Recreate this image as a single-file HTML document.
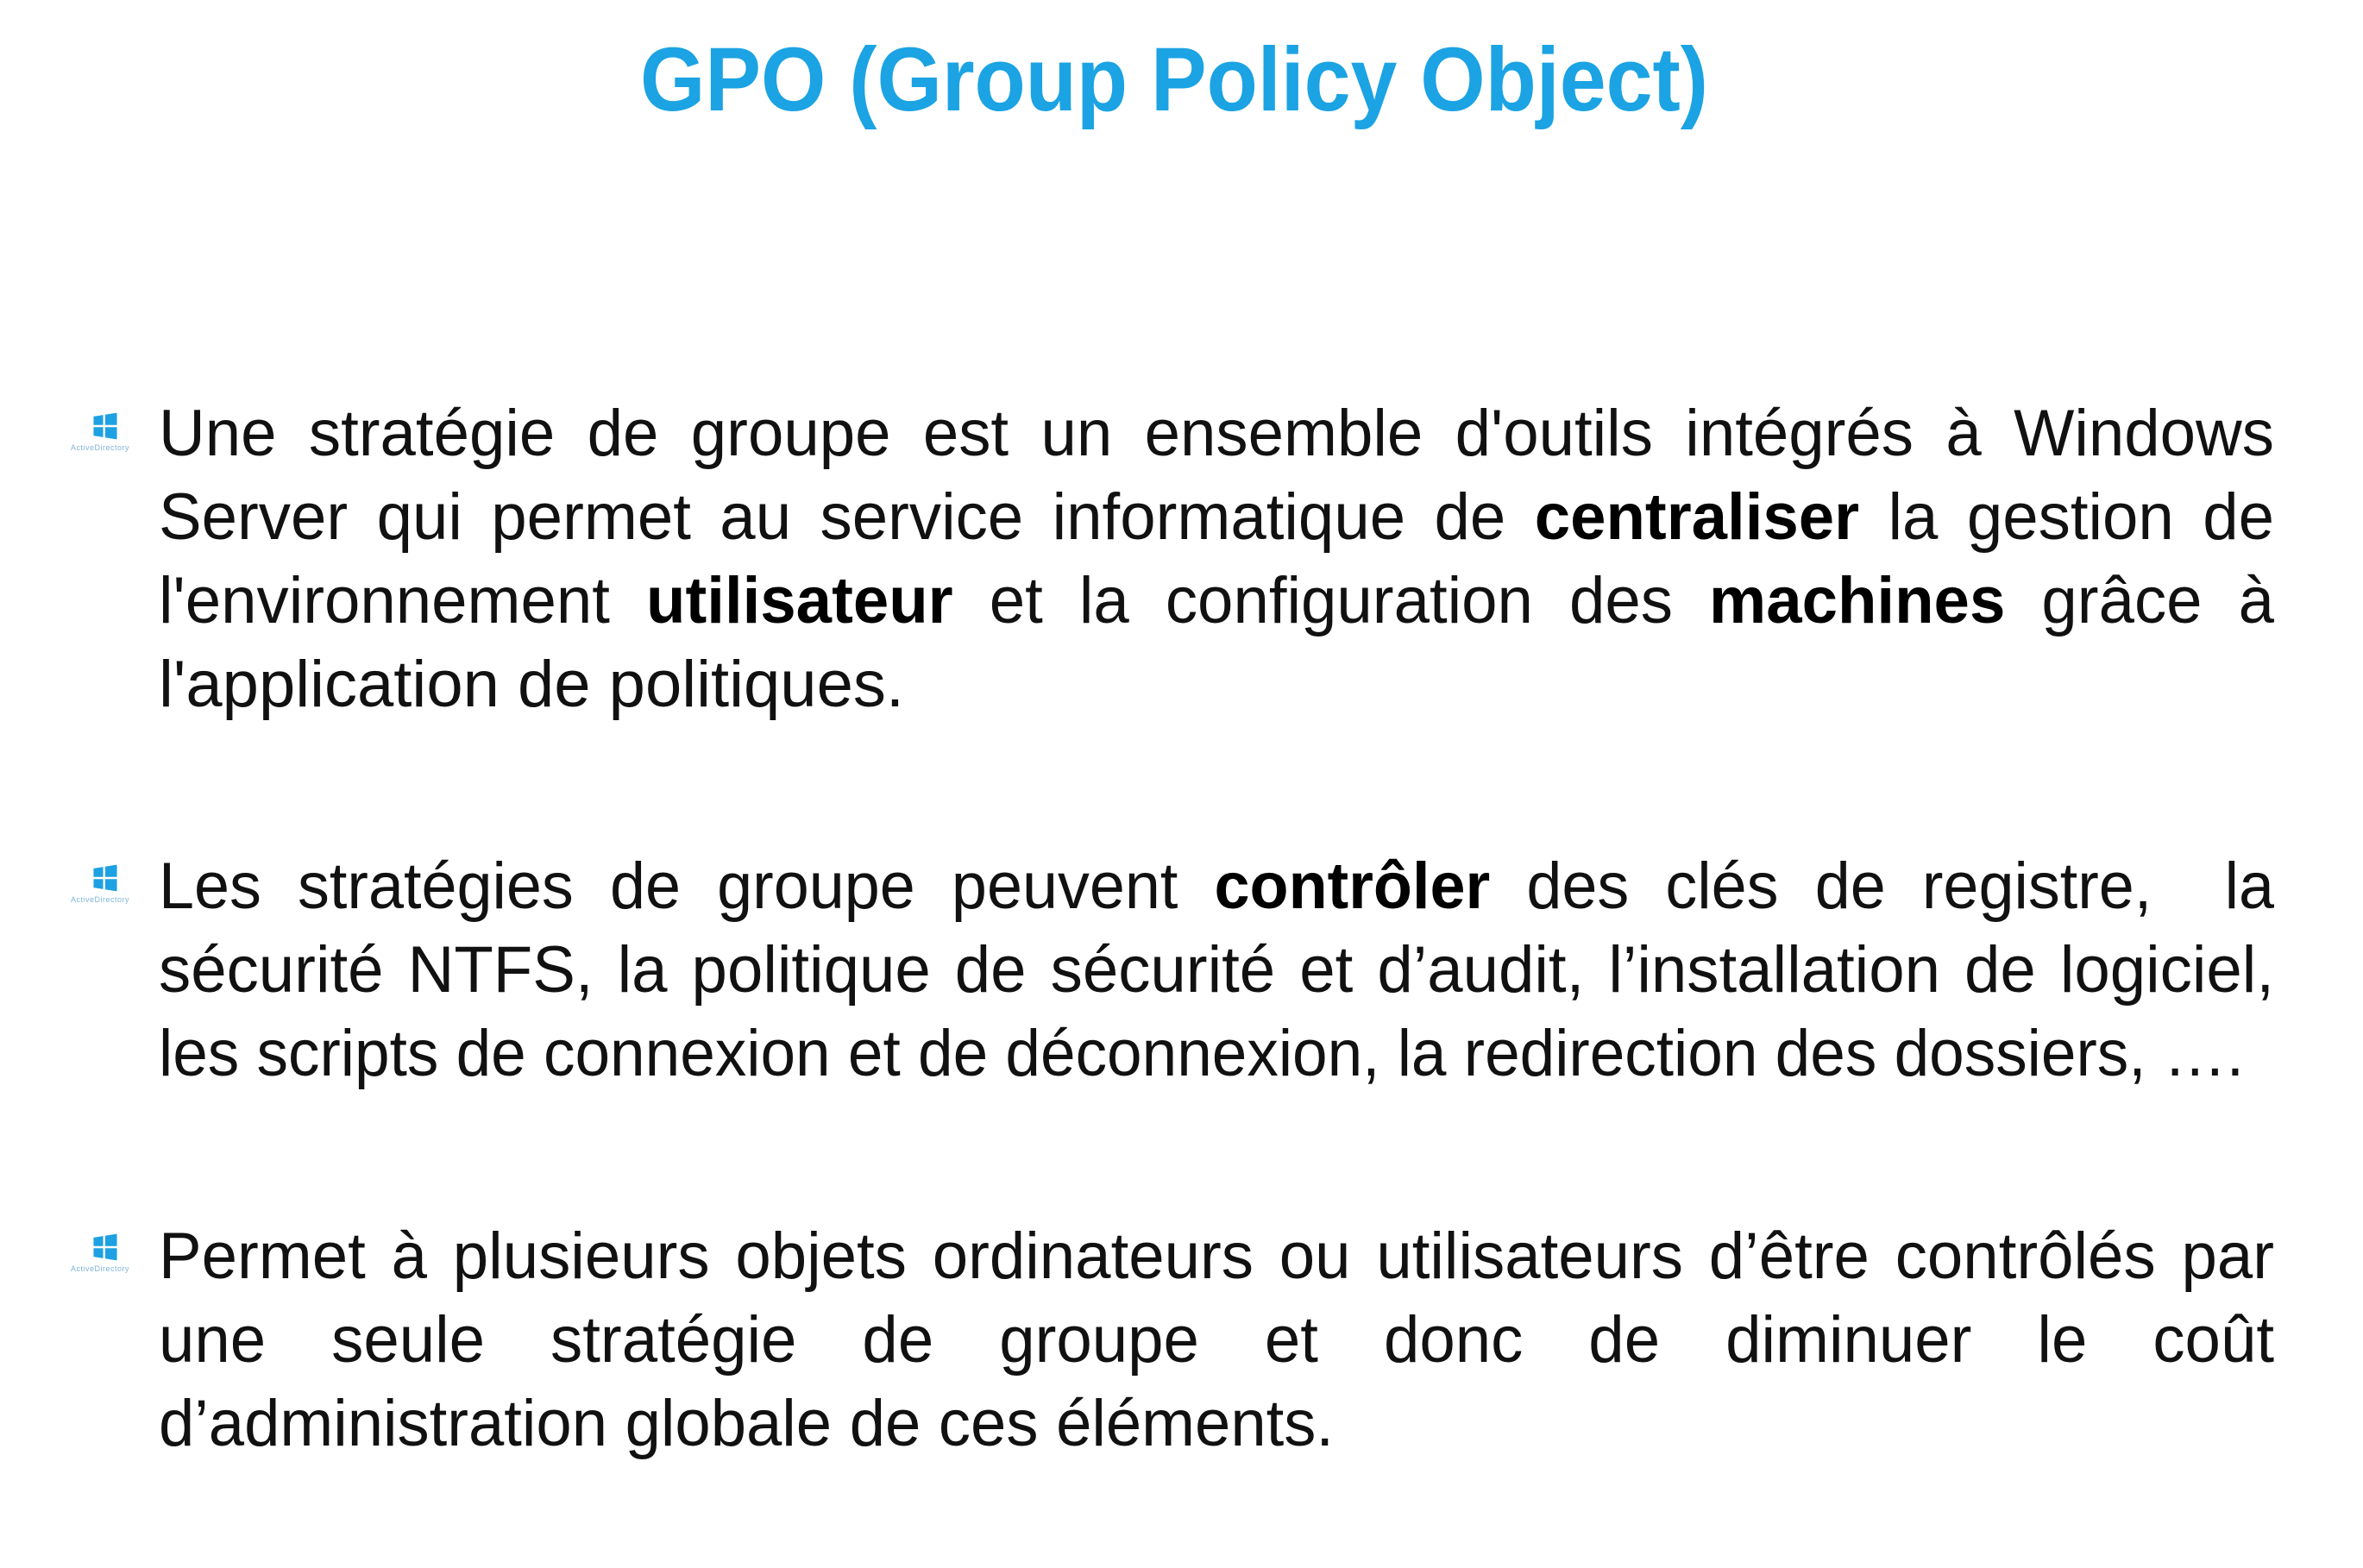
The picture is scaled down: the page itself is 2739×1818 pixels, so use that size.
<!DOCTYPE html>
<html><head><meta charset="utf-8">
<style>
html,body{margin:0;padding:0;background:#fff;}
body{width:2739px;height:1818px;position:relative;overflow:hidden;font-family:"Liberation Sans",sans-serif;}
#title{position:absolute;left:742px;top:33px;font-size:105px;line-height:120px;font-weight:bold;color:#1ba3e3;white-space:nowrap;transform-origin:0 0;}
.ln{position:absolute;left:184px;font-size:76px;line-height:97px;color:#111;white-space:nowrap;transform-origin:0 0;}
.ln b{font-weight:bold;color:#000;}
.ic{position:absolute;width:92px;height:56px;}
.ic .w{position:absolute;left:24px;top:0;width:32px;height:32px;}
.ic .t{position:absolute;left:0;top:36px;font-size:9px;color:#7fb4d8;letter-spacing:0.5px;white-space:nowrap;}
</style></head><body>
<div id="title">GPO (Group Policy Object)</div>

<div class="ic" style="left:82px;top:478px"><svg class="w" viewBox="0 0 26 26"><path d="M2 4 L11 2.5 V12 H2Z M13 2.2 L24 0.5 V12 H13Z M2 14 H11 V23.5 L2 22Z M13 14 H24 V25.5 L13 23.8Z" fill="#1da1e2"/></svg><div class="t">ActiveDirectory</div></div>
<div class="ic" style="left:82px;top:1002px"><svg class="w" viewBox="0 0 26 26"><path d="M2 4 L11 2.5 V12 H2Z M13 2.2 L24 0.5 V12 H13Z M2 14 H11 V23.5 L2 22Z M13 14 H24 V25.5 L13 23.8Z" fill="#1da1e2"/></svg><div class="t">ActiveDirectory</div></div>
<div class="ic" style="left:82px;top:1430px"><svg class="w" viewBox="0 0 26 26"><path d="M2 4 L11 2.5 V12 H2Z M13 2.2 L24 0.5 V12 H13Z M2 14 H11 V23.5 L2 22Z M13 14 H24 V25.5 L13 23.8Z" fill="#1da1e2"/></svg><div class="t">ActiveDirectory</div></div>

<div class="ln j" style="top:454px">Une stratégie de groupe est un ensemble d'outils intégrés à Windows</div>
<div class="ln j" style="top:551px">Server qui permet au service informatique de <b>centraliser</b> la gestion de</div>
<div class="ln j" style="top:648px">l'environnement <b>utilisateur</b> et la configuration des <b>machines</b> grâce à</div>
<div class="ln l" data-w="864" style="top:745px">l'application de politiques.</div>

<div class="ln j" style="top:979px">Les stratégies de groupe peuvent <b>contrôler</b> des clés de registre,&nbsp; la</div>
<div class="ln j" style="top:1076px">sécurité NTFS, la politique de sécurité et d’audit, l’installation de logiciel,</div>
<div class="ln l" data-w="2417" style="top:1173px">les scripts de connexion et de déconnexion, la redirection des dossiers, ….</div>

<div class="ln j" style="top:1408px">Permet à plusieurs objets ordinateurs ou utilisateurs d’être contrôlés par</div>
<div class="ln j" style="top:1505px">une seule stratégie de groupe et donc de diminuer le coût</div>
<div class="ln l" data-w="1362" style="top:1602px">d’administration globale de ces éléments.</div>

<script>
(function(){
  var t=document.getElementById('title');
  var tw=t.getBoundingClientRect().width;
  t.style.transform='scaleX('+(1238/tw)+')';
  var ls=document.querySelectorAll('.ln.l'),sum=0;
  ls.forEach(function(e){sum+=parseFloat(e.dataset.w)/e.getBoundingClientRect().width;});
  var s=sum/ls.length;
  ls.forEach(function(e){e.style.transform='scaleX('+(parseFloat(e.dataset.w)/e.getBoundingClientRect().width)+')';});
  var T=2452;
  document.querySelectorAll('.ln.j').forEach(function(e){
    var w=e.getBoundingClientRect().width;
    var gaps=(e.textContent.match(/ /g)||[]).length;
    var sc=s;
    if(w*sc>T){sc=T/w;}
    var extra=(T/sc-w)/Math.max(gaps,1);
    e.style.wordSpacing=extra+'px';
    var w2=e.getBoundingClientRect().width;
    e.style.transform='scaleX('+(T/w2)+')';
  });
})();
</script>
</body></html>
